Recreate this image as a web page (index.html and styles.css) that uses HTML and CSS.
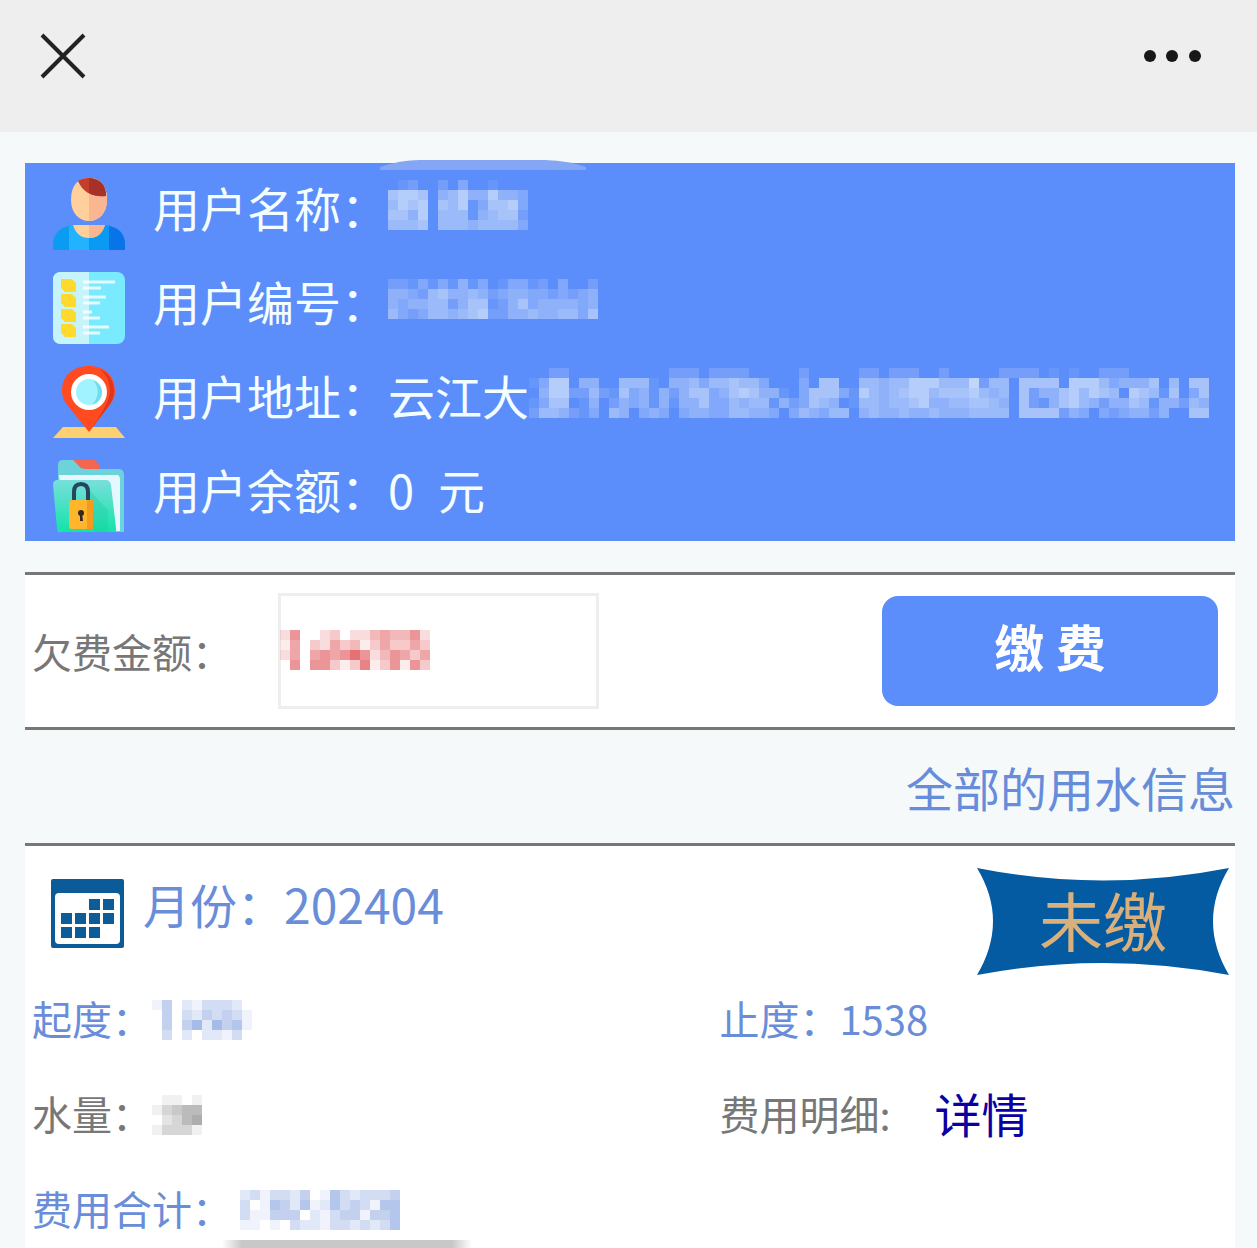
FILE: index.html
```html
<!DOCTYPE html>
<html lang="zh-CN">
<head>
<meta charset="utf-8">
<meta name="viewport" content="width=device-width, initial-scale=1">
<title>水费查询</title>
<link rel="stylesheet" href="styles.css">
</head>
<body>
<header class="topbar">
  <button class="icon-button" type="button" aria-label="关闭">
    <svg width="46" height="46" viewBox="0 0 46 46"><path d="M2 2 44 44M44 2 2 44" stroke="#222" stroke-width="4" fill="none"/></svg>
  </button>
  <button class="icon-button" type="button" aria-label="更多">
    <svg width="58" height="46" viewBox="0 0 58 46" fill="#181818"><circle cx="7" cy="23" r="6"/><circle cx="29" cy="23" r="6"/><circle cx="52" cy="23" r="6"/></svg>
  </button>
</header>
<main class="page">
  <section class="account">
    <svg class="account-smear" width="206" height="12" viewBox="0 0 206 12"><path d="M0 9Q20 2 40 2H165Q190 3 206 9V12H0Z" fill="#84a6f5"/></svg>
    <div class="account-row">
      <svg class="account-icon" viewBox="0 0 72 72">
        <path d="M18 22C18 7 25 0 36 0S54 7 54 22C54 35 46 43 36 43S18 35 18 22Z" fill="#ffd09b"/>
        <path d="M36 0C47 0 54 7 54 22C54 35 46 43 36 43Z" fill="#f9b691"/>
        <path d="M25 3C31-1 41-1 47 4Q53 9 53 18C40 19 30 15 25 3Z" fill="#c43e2b"/>
        <path d="M36 0Q53 1 53 18Q43 19 36 15Z" fill="#a73128"/>
        <path d="M0 72V65Q2 49 20 47H52Q70 49 72 65V72Z" fill="#0b9bf0"/>
        <path d="M16 48 20 47H52L56 48V72H16Z" fill="#22b2ff"/>
        <path d="M36 47H52L56 48V72H36Z" fill="#099bf3"/>
        <path d="M56 48Q71 51 72 65V72H56Z" fill="#0874e8"/>
        <path d="M20 47H52Q48 60 36 60T20 47Z" fill="#ffd09b"/><path d="M36 47H52Q48 60 36 60Z" fill="#f9b691"/>
      </svg>
      <span class="account-label">用户名称：</span>
      <span class="mosaic" data-cells="01200203001000 67760457447443 57670657136673 66470555145662 55560555455553 00000000000000"></span>
    </div>
    <div class="account-row">
      <svg class="account-icon" viewBox="0 0 72 72">
        <rect width="72" height="72" rx="8" fill="#7aeaff"/><path d="M8 0H36V72H8Q0 72 0 64V8Q0 0 8 0Z" fill="#c5f4fa"/>
        <g fill="#ffda2d"><path d="M8 7H19L23 11V20H12L8 16ZM8 22H19L23 26V35H12L8 31ZM8 37H19L23 41V50H12L8 46ZM8 52H19L23 56V65H12L8 61Z"/></g>
        <path d="M30 10H62M30 16H48M30 25H53M30 31H47M30 40H39M30 46H47M30 55H56M30 61H47" stroke="#fff" stroke-width="3" opacity=".8"/>
      </svg>
      <span class="account-label">用户编号：</span>
      <span class="mosaic" data-cells="221313141301331203002 443256445423443323234 434455246612463444434 532355456722445445536 000000000000000000000"></span>
    </div>
    <div class="account-row">
      <svg class="account-icon" viewBox="0 0 72 72">
        <path d="M10 61H63L72 72H0Z" fill="#ffd072"/>
        <path d="M36 66 15 40Q9 33 9 25C9 10 20 0 36 0S62 10 62 25Q62 33 56 40Z" fill="#ff4b1f"/>
        <path d="M47 3Q61 10 61 26Q61 33 55 41L36 66Q57 37 57 25Q57 11 47 3Z" fill="#df351c"/>
        <circle cx="36" cy="26" r="18" fill="#fff"/><circle cx="36" cy="26" r="13" fill="#a0f3ff"/><path d="M40 14A13 13 0 0 1 39 39Q50 26 40 14Z" fill="#73dcec"/>
      </svg>
      <span class="account-label">用户地址：</span>
      <span>云江大</span>
      <span class="mosaic" data-cells="00220000000000222022220000020000022022200200000222201010022200000000 13770440055510445355655300030660055455777555825506666077753444605066 04772252163414246634676441036663175456775666754506244675765076516036 13660140243414144633545514236540155455674455665406214675424465144254 25542130540343034433554430354355045445445444555506666243032344240066 00000000000000000000000000000000000000000000000000000000000000000000"></span>
    </div>
    <div class="account-row">
      <svg class="account-icon" viewBox="0 0 72 72">
        <defs><linearGradient id="folder" x1="0" y1="0" x2="0" y2="1"><stop stop-color="#79dfdc"/><stop offset="1" stop-color="#12e4a8"/></linearGradient></defs>
        <path d="M5 5Q5 0 10 0H24Q27 0 29 4T36 9H66Q71 9 71 15V72H5Z" fill="#6cd3da"/>
        <path d="M20 0H40Q44 0 46 5L47 9H33Q27 9 25 5Z" fill="#f5664f"/>
        <path d="M6 15H64Q67 15 67 20V71H12Z" fill="#e5f8ff"/>
        <path d="M0 25Q0 20 5 20H53Q57 20 58 25L63 68Q64 72 60 72H8Q4 72 4 68Z" fill="url(#folder)"/>
        <path d="M36 30 55 50V72H40Z" fill="#20c99e" opacity=".35"/>
        <path d="M21 44V32Q21 24 28 24T35 32V44" fill="none" stroke="#26465f" stroke-width="4"/>
        <rect x="16" y="40" width="24" height="29" rx="3" fill="#ffb52c"/><path d="M34 40H40V69H34Z" fill="#f29b1d"/>
        <circle cx="28" cy="53" r="3" fill="#332921"/><path d="M27 53H29L30 61H27Z" fill="#332921"/>
      </svg>
      <span class="account-label">用户余额：</span>
      <span class="balance"><span>0</span><span>元</span></span>
    </div>
  </section>

  <form class="debt">
    <label class="debt-label" for="amount">欠费金额：</label>
    <div class="amount">
      <input id="amount" class="amount-input" type="text" readonly>
      <span class="mosaic amount-cover" data-cells="260023022454462 150325341353353 250565686246535 060663137136163"></span>
    </div>
    <button class="pay" type="button">缴 费</button>
  </form>

  <nav class="all"><a href="#all">全部的用水信息</a></nav>

  <section class="bill">
    <div class="bill-head">
      <svg class="calendar" width="73" height="69" viewBox="0 0 73 69">
        <rect width="73" height="69" rx="2" fill="#0c5b99"/><rect x="4" y="14" width="65" height="51" rx="4" fill="#fff"/>
        <path d="M38 20h11v11h-11zM52 20h11v11h-11zM10 34h11v11h-11zM24 34h11v11h-11zM38 34h11v11h-11zM52 34h11v11h-11zM10 48h11v11h-11zM24 48h11v11h-11zM38 48h11v11h-11z" fill="#0d5c98"/>
      </svg>
      <h2 class="month">月份：<span class="month-value">202404</span></h2>
      <div class="status">
        <svg class="status-shape" viewBox="0 0 252 107" preserveAspectRatio="none"><path d="M0 0Q126 25 252 0Q220 53 252 107Q126 83 0 107Q32 53 0 0Z" fill="#045ba2"/></svg>
        <span class="status-text">未缴</span>
      </div>
    </div>
    <div class="readings">
      <div class="reading blue"><span>起度：</span><span class="mosaic" data-cells="1402133320 0403243431 0404626451 0302022130"></span></div>
      <div class="reading blue"><span>止度：</span><span>1538</span></div>
      <div class="reading"><span>水量：</span><span class="mosaic" data-cells="01101 13455 02356 13331"></span></div>
      <div class="reading"><span>费用明细:</span><a class="detail" href="#detail">详情</a></div>
      <div class="reading blue"><span>费用合计：</span><span class="mosaic total-cover" data-cells="2313324015323334 3015425125343155 3114440213441445 1101032213323235"></span></div>
    </div>
    <div class="bill-smear"></div>
  </section>
</main>
<script src="mosaic.js"></script>
</body>
</html>
```
FILE: styles.css
```css
* { box-sizing: border-box; }

body {
  margin: 0;
  min-height: 100vh;
  display: flex;
  flex-direction: column;
  background: #f6f9f9;
  color: #777;
  font-family: "Noto Sans CJK SC", "Noto Sans", sans-serif;
  font-size: 40px;
  line-height: 56px;
}

button, input { font: inherit; }

.topbar {
  height: 132px;
  padding: 0 56px 20px 40px;
  display: flex;
  justify-content: space-between;
  align-items: center;
  background: #eee;
}

.icon-button {
  display: flex;
  padding: 0;
  border: 0;
  background: none;
}

.page {
  flex: 1;
  display: flex;
  flex-direction: column;
  padding: 31px 22px 0 25px;
}

.account {
  position: relative;
  padding-bottom: 2px;
  background: #5b8dfb;
  color: #f4fdff;
  font-size: 47px;
  line-height: 88px;
}

.account-smear {
  position: absolute;
  top: -5px;
  left: 355px;
}

.account-row {
  display: flex;
  height: 94px;
  padding-left: 28px;
  white-space: nowrap;
}

.account-row .mosaic {
  align-self: center;
  color: #dce8fa;
}

.account-icon {
  flex: none;
  width: 72px;
  height: 72px;
  margin: 15px 28px 0 0;
}

.balance {
  display: flex;
  gap: 24px;
}

.mosaic {
  display: block;
  flex: none;
}

.mosaic svg { display: block; }

.debt {
  display: flex;
  align-items: center;
  height: 158px;
  margin-top: 31px;
  padding: 0 17px 0 7px;
  border-top: 3px solid #777;
  border-bottom: 3px solid #777;
  background: #fff;
}

.debt-label { width: 246px; }

.amount { position: relative; }

.amount-input {
  display: block;
  width: 321px;
  height: 116px;
  border: 3px solid #eee;
  background: #fff;
  color: #e05a5c;
}

.amount-cover {
  position: absolute;
  top: 37px;
  left: 2px;
  color: #e04e53;
}

.pay {
  width: 336px;
  height: 110px;
  margin-left: auto;
  padding: 0 0 12px;
  border: 0;
  border-radius: 16px;
  background: #5b8dfb;
  color: #fff;
  font-size: 50px;
  font-weight: 700;
}

.all {
  font-size: 47px;
  line-height: 113px;
  text-align: right;
}

.all a {
  color: #668cda;
  text-decoration: none;
}

.bill {
  flex: 1;
  padding-left: 7px;
  border-top: 3px solid #777;
  background: #fff;
}

.bill-head {
  display: flex;
  padding: 22px 6px 0 19px;
}

.calendar { margin-top: 11px; }

.month {
  margin: 0 0 0 19px;
  color: #698dd8;
  font-size: 47px;
  font-weight: 400;
  line-height: 70px;
}

.month-value { font-size: 48px; }

.status {
  display: grid;
  width: 252px;
  height: 107px;
  margin-left: auto;
}

.status-shape, .status-text { grid-area: 1 / 1; }

.status-shape {
  width: 100%;
  height: 107px;
}

.status-text {
  color: #d9af7b;
  font-size: 64px;
  line-height: 100px;
  text-align: center;
  z-index: 1;
}

.readings {
  display: grid;
  grid-template-columns: 4fr 3fr;
  row-gap: 35px;
  padding-top: 15px;
}

.reading {
  display: flex;
  height: 60px;
}

.reading .mosaic { margin-top: 10px; }

.blue { color: #698dd8; }

.detail {
  margin-left: 44px;
  color: #0b00a0;
  font-size: 47px;
  text-decoration: none;
}

.reading .total-cover { margin-left: 8px; }

.bill-smear {
  width: 250px;
  height: 8px;
  margin-left: 190px;
  background: linear-gradient(90deg, transparent, #c8c8c8 8%, #c8c8c8 92%, transparent);
}
```
FILE: mosaic.js
```js
// Masks private values: each digit is the opacity (in tenths) of one 10px cell.
const NS = "http://www.w3.org/2000/svg";
document.querySelectorAll(".mosaic").forEach((el) => {
  const rows = el.dataset.cells.split(" ");
  const svg = document.createElementNS(NS, "svg");
  svg.setAttribute("width", rows[0].length * 10);
  svg.setAttribute("height", rows.length * 10);
  svg.setAttribute("fill", "currentColor");
  rows.forEach((row, y) => {
    [...row].forEach((level, x) => {
      if (level === "0") return;
      const cell = document.createElementNS(NS, "rect");
      cell.setAttribute("x", x * 10);
      cell.setAttribute("y", y * 10);
      cell.setAttribute("width", 10);
      cell.setAttribute("height", 10);
      cell.setAttribute("opacity", level / 10);
      svg.append(cell);
    });
  });
  el.append(svg);
});
```
